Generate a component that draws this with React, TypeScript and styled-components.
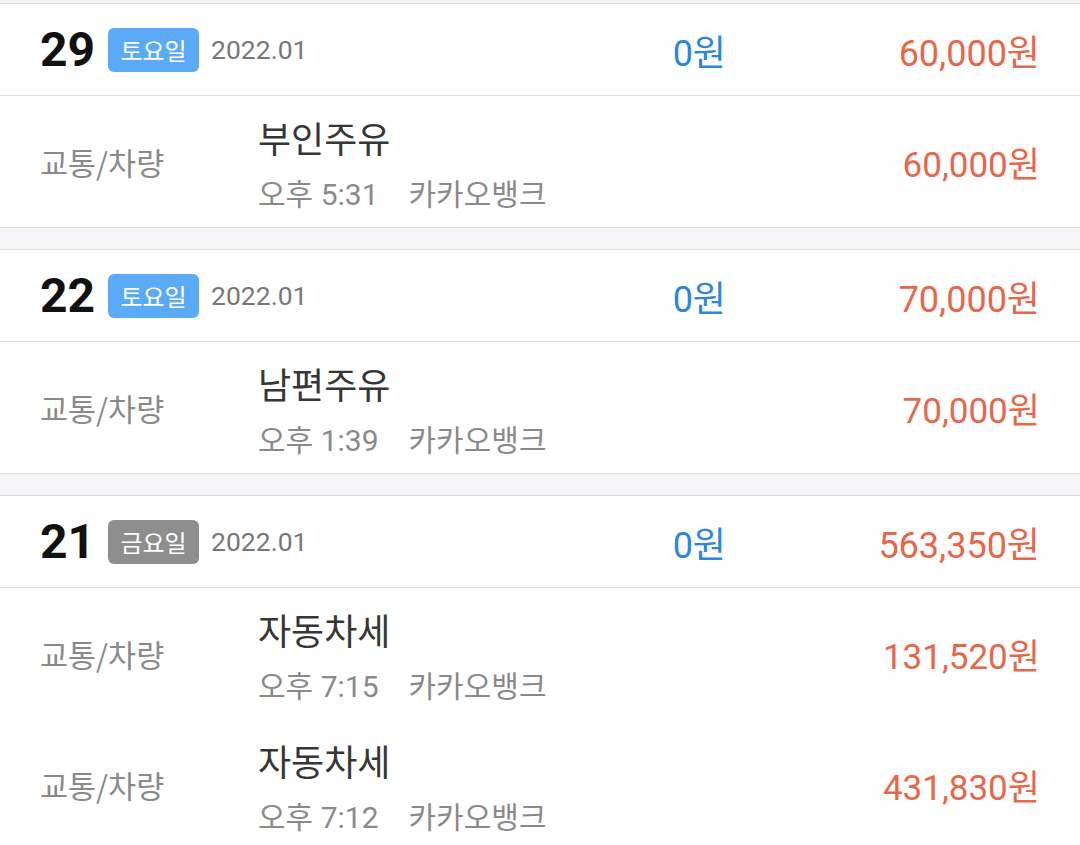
import React from "react";
import styled, { createGlobalStyle } from "styled-components";

const GlobalStyle = createGlobalStyle`
  html, body {
    margin: 0;
    padding: 0;
    background: #ffffff;
  }
  body {
    font-family: Roboto, "Noto Sans CJK KR", "Noto Sans", sans-serif;
    -webkit-font-smoothing: antialiased;
  }
`;

const Page = styled.div`
  width: 1080px;
  height: 845px;
  overflow: hidden;
  background: #ffffff;
`;

const Gap = styled.div<{ h: number }>`
  height: ${(p) => p.h}px;
  background: #f5f5f7;
`;

const Section = styled.section`
  background: #ffffff;
  border-top: 1px solid #dcdcde;
  border-bottom: 1px solid #dcdcde;
`;

const DayHeader = styled.div`
  display: grid;
  grid-template-columns: 1fr 180px 314px;
  align-items: center;
  height: 91px;
  padding: 0 40px 0 40px;
  border-bottom: 1px solid #dcdcde;
`;

const DayLeft = styled.div`
  display: flex;
  align-items: center;
`;

const DayNum = styled.span`
  font-family: Roboto, sans-serif;
  font-size: 48px;
  font-weight: 700;
  color: #111111;
  line-height: 1;
  margin-right: 13px;
`;

const Badge = styled.span<{ holiday?: boolean }>`
  display: inline-flex;
  align-items: center;
  justify-content: center;
  width: 91px;
  height: 44px;
  border-radius: 6px;
  background: ${(p) => (p.holiday ? "#8e8e8e" : "#5aaaf7")};
  color: #ffffff;
  font-family: "Noto Sans CJK KR", sans-serif;
  font-size: 24px;
  margin-right: 12px;
`;

const MonthText = styled.span`
  font-family: Roboto, sans-serif;
  font-size: 26.5px;
  color: #777777;
`;

const Amount = styled.span<{ kind: "in" | "out"; size: number }>`
  text-align: right;
  font-family: Roboto, "Noto Sans CJK KR", sans-serif;
  font-size: ${(p) => p.size}px;
  color: ${(p) => (p.kind === "in" ? "#2d86dd" : "#e8664a")};
  white-space: nowrap;
`;

const Row = styled.div`
  display: grid;
  grid-template-columns: 218px 1fr auto;
  align-items: center;
  height: 131px;
  box-sizing: border-box;
  padding: 0 40px 0 40px;
`;

const Category = styled.span`
  font-family: "Noto Sans CJK KR", sans-serif;
  font-size: 30.5px;
  color: #8a8a8a;
`;

const Info = styled.div`
  display: flex;
  flex-direction: column;
  gap: 16px;
  padding-top: 6px;
`;

const Title = styled.span`
  font-family: "Noto Sans CJK KR", sans-serif;
  font-size: 36px;
  line-height: 44px;
  color: #363636;
`;

const Sub = styled.span`
  display: flex;
  gap: 30px;
  font-family: Roboto, "Noto Sans CJK KR", sans-serif;
  font-size: 30px;
  line-height: 40px;
  color: #8a8a8a;
`;

type Tx = { category: string; title: string; time: string; bank: string; amount: string };
type Day = { day: string; weekday: string; holiday?: boolean; income: string; expense: string; items: Tx[] };

const days: Day[] = [
  {
    day: "29",
    weekday: "토요일",
    income: "0원",
    expense: "60,000원",
    items: [{ category: "교통/차량", title: "부인주유", time: "오후 5:31", bank: "카카오뱅크", amount: "60,000원" }],
  },
  {
    day: "22",
    weekday: "토요일",
    income: "0원",
    expense: "70,000원",
    items: [{ category: "교통/차량", title: "남편주유", time: "오후 1:39", bank: "카카오뱅크", amount: "70,000원" }],
  },
  {
    day: "21",
    weekday: "금요일",
    holiday: true,
    income: "0원",
    expense: "563,350원",
    items: [
      { category: "교통/차량", title: "자동차세", time: "오후 7:15", bank: "카카오뱅크", amount: "131,520원" },
      { category: "교통/차량", title: "자동차세", time: "오후 7:12", bank: "카카오뱅크", amount: "431,830원" },
    ],
  },
];

export default function App() {
  return (
    <Page>
      <GlobalStyle />
      <Gap h={3} />
      {days.map((d, i) => (
        <React.Fragment key={d.day}>
          {i > 0 && <Gap h={21} />}
          <Section>
            <DayHeader>
              <DayLeft>
                <DayNum>{d.day}</DayNum>
                <Badge holiday={d.holiday}>{d.weekday}</Badge>
                <MonthText>2022.01</MonthText>
              </DayLeft>
              <Amount kind="in" size={36}>{d.income}</Amount>
              <Amount kind="out" size={36}>{d.expense}</Amount>
            </DayHeader>
            {d.items.map((t, j) => (
              <Row key={j}>
                <Category>{t.category}</Category>
                <Info>
                  <Title>{t.title}</Title>
                  <Sub>
                    <span>{t.time}</span>
                    <span>{t.bank}</span>
                  </Sub>
                </Info>
                <Amount kind="out" size={35}>{t.amount}</Amount>
              </Row>
            ))}
          </Section>
        </React.Fragment>
      ))}
    </Page>
  );
}
